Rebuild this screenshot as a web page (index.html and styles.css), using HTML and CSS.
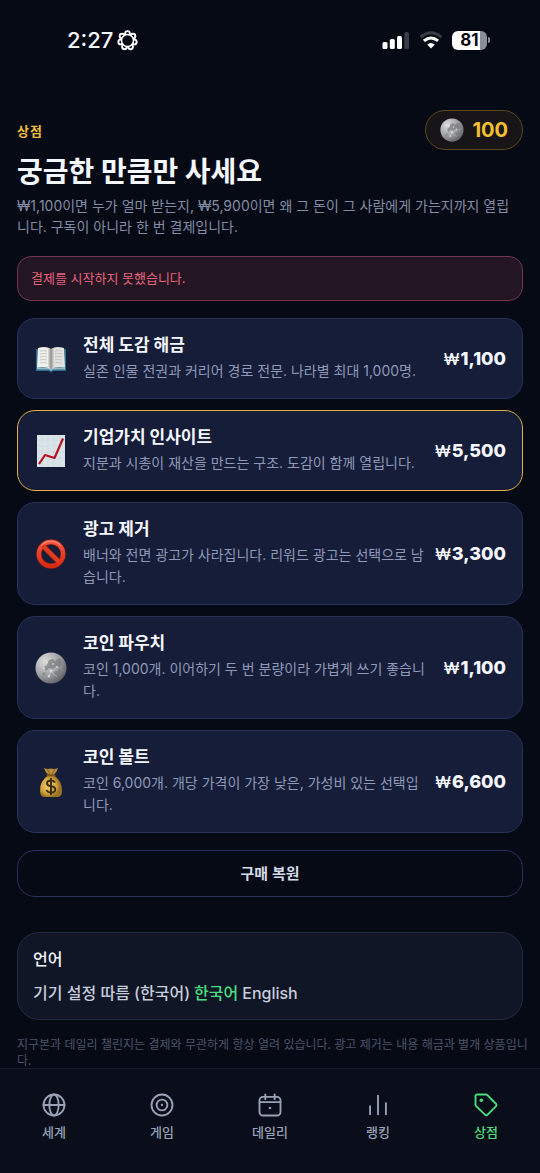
FILE: index.html
```html
<!DOCTYPE html>
<html lang="ko">
<head>
<meta charset="utf-8">
<meta name="viewport" content="width=device-width, initial-scale=1">
<title>상점</title>
<link rel="stylesheet" href="styles.css">
</head>
<body>
<svg width="0" height="0" class="defs" aria-hidden="true">
  <defs>
    <radialGradient id="moon-fill" cx="0.3" cy="0.28" r="0.85">
      <stop offset="0" stop-color="#dcdcdc"/><stop offset="0.5" stop-color="#a5a6a8"/><stop offset="1" stop-color="#55575b"/>
    </radialGradient>
    <symbol id="moon" viewBox="0 0 32 32">
      <circle cx="16" cy="16" r="15.5" fill="url(#moon-fill)"/>
      <path d="M14 8l4-1 2 2 4-3 3 5-2 4-4-1-3 3-4-1-3 3-2-4 3-2z" fill="#77797c" opacity=".7"/>
      <path d="M20 18l5-1 2 3-4 3-4-1zM8 20l3 1-1 3-3-1z" fill="#7b7d80" opacity=".6"/>
      <g fill="#e3e3e3" opacity=".75"><circle cx="12" cy="10" r="1.2"/><circle cx="18" cy="12" r="1"/><circle cx="16" cy="19" r="1.5"/><circle cx="14" cy="24" r="1.3"/><circle cx="22" cy="15" r="1"/><circle cx="9" cy="16" r="1"/></g>
      <path d="M16 19l6 6M16 19l-3 7M16 19l7-1" stroke="#ddd" stroke-width=".7" opacity=".6"/>
    </symbol>
  </defs>
</svg>
<div class="app">
  <div class="status">
    <div class="status-side">
      <span class="time">2:27</span>
      <svg width="21" height="21" viewBox="0 0 22 22" fill="none" stroke="#fff" stroke-width="2" aria-hidden="true">
        <g fill="#060a15"><circle cx="11" cy="3.7" r="2.500"/><circle cx="16.700" cy="6.500" r="2.500"/><circle cx="18.100" cy="12.600" r="2.500"/><circle cx="14.200" cy="17.600" r="2.500"/><circle cx="7.800" cy="17.600" r="2.500"/><circle cx="3.900" cy="12.600" r="2.500"/><circle cx="5.300" cy="6.500" r="2.500"/></g>
        <circle cx="11" cy="11" r="6.300" fill="#060a15" stroke-width="1.700"/>
      </svg>
    </div>
    <div class="status-side">
      <svg width="28" height="18" viewBox="0 0 28 18" fill="#fff" aria-hidden="true">
        <rect x="0.5" y="11" width="5" height="7" rx="1.5"/><rect x="7.8" y="8" width="5" height="10" rx="1.5"/><rect x="15" y="5" width="5" height="13" rx="1.5"/><rect x="22.3" y="1" width="4.7" height="17" rx="1.5" fill="#393d47"/>
      </svg>
      <svg width="24" height="18" viewBox="0 0 24 18" fill="none" stroke-width="3" aria-hidden="true">
        <path d="M1.5 6.2Q12-2.7 22.5 6.2" stroke="#393d47"/>
        <path d="M4.9 9.9Q12 4 19.1 9.9" stroke="#fff"/>
        <path d="M12 17.5l-3.8-4.1q3.8-3 7.6 0z" fill="#fff"/>
      </svg>
      <div class="battery"><span class="battery-level">81</span></div>
    </div>
  </div>

  <main class="scroll">
    <header class="top">
      <span class="eyebrow">상점</span>
      <span class="coins"><svg width="24" height="24" aria-hidden="true"><use href="#moon"/></svg>100</span>
    </header>
    <h1 class="title">궁금한 만큼만 사세요</h1>
    <p class="lead">₩1,100이면 누가 얼마 받는지, ₩5,900이면 왜 그 돈이 그 사람에게 가는지까지 열립니다. 구독이 아니라 한 번 결제입니다.</p>
    <p class="alert" role="alert">결제를 시작하지 못했습니다.</p>

    <div class="products">
      <button type="button" class="card">
        <svg class="emoji" viewBox="0 0 34 34" aria-hidden="true">
          <path d="M2 7h30v22H19l-2 1.5L15 29H2z" fill="#2d6d8e"/>
          <path d="M3 25.5h28v2H19l-2 1.5-2-1.5H3z" fill="#9dbac6"/>
          <path d="M4 6q8-2.500 13 1v20q-5-3-14-1.500z" fill="#efefed"/>
          <path d="M30 6q-8-2.500-13 1v20q5-3 14-1.500z" fill="#e2e2df"/>
          <path d="M14.500 6q2 .5 2.500 2 .5-1.500 2.500-2v19l-2.500 2-2.500-2z" fill="#b9b9b5"/>
          <path d="M17 7v20" stroke="#777" stroke-width=".8"/>
          <path d="M6 9q4-1 7 0M6 12q4-1 7 0M6 15q4-1 7 0M6 18q4-1 7 0M6 21q4-1 7 0M21 9q3-1 7 0M21 12q3-1 7 0M21 15q3-1 7 0M21 18q3-1 7 0M21 21q3-1 7 0" stroke="#bbb" stroke-width=".8" fill="none"/>
        </svg>
        <span class="info"><span class="name">전체 도감 해금</span><span class="desc">실존 인물 전권과 커리어 경로 전문. 나라별 최대 1,000명.</span></span>
        <span class="price"><span class="won">₩</span>1,100</span>
      </button>
      <button type="button" class="card card-featured">
        <svg class="emoji" viewBox="0 0 34 34" aria-hidden="true">
          <rect x="3" y="1" width="28" height="32" fill="#d9e3e8"/>
          <path d="M3 6h28M3 12h28M3 18h28M3 24h28M8 1v32M14 1v32M20 1v32M26 1v32" stroke="#cdd9df" stroke-width=".6"/>
          <path d="M5 30l6-9 9.500 3L29 4.500" fill="none" stroke="#b8141f" stroke-width="2.200" stroke-linejoin="round"/>
        </svg>
        <span class="info"><span class="name">기업가치 인사이트</span><span class="desc">지분과 시총이 재산을 만드는 구조. 도감이 함께 열립니다.</span></span>
        <span class="price"><span class="won">₩</span>5,500</span>
      </button>
      <button type="button" class="card">
        <svg class="emoji" viewBox="0 0 34 34" aria-hidden="true">
          <defs><linearGradient id="ban" x2="0" y2="1"><stop stop-color="#f0573f"/><stop offset="1" stop-color="#d52c12"/></linearGradient></defs>
          <g fill="none" stroke="#8f1c12" stroke-width="5.400"><circle cx="17" cy="17" r="12"/><path d="M8.500 8.500l17 17"/></g>
          <g fill="none" stroke="url(#ban)" stroke-width="4.200"><circle cx="17" cy="17" r="12.200"/><path d="M8.500 8.500l17 17" stroke="#df3a22"/></g>
          <path d="M7 9a13 13 0 0 1 20 0" fill="none" stroke="#ff9c88" stroke-width=".9"/>
        </svg>
        <span class="info"><span class="name">광고 제거</span><span class="desc">배너와 전면 광고가 사라집니다. 리워드 광고는 선택으로 남습니다.</span></span>
        <span class="price"><span class="won">₩</span>3,300</span>
      </button>
      <button type="button" class="card">
        <svg class="emoji" viewBox="0 0 34 34" aria-hidden="true"><use href="#moon" x="1" y="1" width="32" height="32"/></svg>
        <span class="info"><span class="name">코인 파우치</span><span class="desc">코인 1,000개. 이어하기 두 번 분량이라 가볍게 쓰기 좋습니다.</span></span>
        <span class="price"><span class="won">₩</span>1,100</span>
      </button>
      <button type="button" class="card">
        <svg class="emoji" viewBox="0 0 34 34" aria-hidden="true">
          <defs><radialGradient id="bag" cx=".4" cy=".5"><stop stop-color="#f2cf6c"/><stop offset=".7" stop-color="#d3a53c"/><stop offset="1" stop-color="#9b7224"/></radialGradient></defs>
          <path d="M10 3q3.500 1.500 7 .5 3.500 1 7-.5-1 4-4.500 7h-5Q11 7 10 3z" fill="#b98f3c"/>
          <path d="M14.500 10h5q9 6 8.500 16 0 6-5 6H11q-5 0-5-6Q5.500 16 14.500 10z" fill="url(#bag)"/>
          <path d="M13.500 10.200h7" stroke="#7d5617" stroke-width="2" stroke-linecap="round"/>
          <path d="M13 4l3 5M21 4l-3 5" stroke="#7d5617" stroke-width=".8"/>
          <path d="M21 17.500q-1-2-4-2-4 0-4 2.800 0 2.500 4 3 4.200.5 4.200 3.200 0 3-4.200 3-3.500 0-4.500-2.500M17 13v17" fill="none" stroke="#3c2c10" stroke-width="2"/>
        </svg>
        <span class="info"><span class="name">코인 볼트</span><span class="desc">코인 6,000개. 개당 가격이 가장 낮은, 가성비 있는 선택입니다.</span></span>
        <span class="price"><span class="won">₩</span>6,600</span>
      </button>
    </div>

    <button type="button" class="restore">구매 복원</button>

    <section class="language" aria-labelledby="language-title">
      <h2 class="language-title" id="language-title">언어</h2>
      <div class="language-options">
        <button type="button" class="option">기기 설정 따름 (한국어)</button>
        <button type="button" class="option option-active">한국어</button>
        <button type="button" class="option">English</button>
      </div>
    </section>
    <p class="note">지구본과 데일리 챌린지는 결제와 무관하게 항상 열려 있습니다. 광고 제거는 내용 해금과 별개 상품입니다.</p>
  </main>

  <nav class="tabs">
    <a class="tab" href="#world"><svg class="tab-icon" viewBox="0 0 24 24" aria-hidden="true"><circle cx="12" cy="12" r="9"/><path d="M3 12h18"/><ellipse cx="12" cy="12" rx="4" ry="9"/></svg>세계</a>
    <a class="tab" href="#game"><svg class="tab-icon" viewBox="0 0 24 24" aria-hidden="true"><circle cx="12" cy="12" r="9"/><circle cx="12" cy="12" r="4.600"/><circle cx="12" cy="12" r="1" class="dot"/></svg>게임</a>
    <a class="tab" href="#daily"><svg class="tab-icon" viewBox="0 0 24 24" aria-hidden="true"><rect x="3" y="5" width="18" height="16" rx="3"/><path d="M3 9.500h18M8 3v4M16 3v4"/><circle cx="12" cy="14.500" r="1.100" class="dot"/></svg>데일리</a>
    <a class="tab" href="#ranking"><svg class="tab-icon" viewBox="0 0 24 24" aria-hidden="true"><path d="M5.200 20v-7M12 20V4M18.800 20v-9.500"/></svg>랭킹</a>
    <a class="tab tab-active" href="#shop" aria-current="page"><svg class="tab-icon" viewBox="0 0 24 24" aria-hidden="true"><path d="M3 4.500A1.500 1.500 0 0 1 4.500 3h7.300a2 2 0 0 1 1.400.6l7.300 7.300a1.600 1.600 0 0 1 0 2.300l-7.100 7.100a1.600 1.600 0 0 1-2.300 0l-7.500-7.400a2 2 0 0 1-.6-1.400z"/><circle cx="8" cy="8" r="1.500" class="dot"/></svg>상점</a>
  </nav>
</div>
</body>
</html>
```

FILE: styles.css
```css
* { box-sizing: border-box; }

body, h1, h2, p { margin: 0; }

body {
  background: #060a15;
  color: #f5f7ff;
  font-family: Inter, "Noto Sans CJK KR", sans-serif;
}

button {
  font: inherit;
  color: inherit;
  background: none;
  border: 0;
  padding: 0;
  cursor: pointer;
}

.defs { position: absolute; }

.app {
  display: flex;
  flex-direction: column;
  height: 100vh;
}

.status {
  flex: none;
  display: flex;
  align-items: center;
  justify-content: space-between;
  height: 80px;
  padding: 0 50px 0 67px;
}

.status-side {
  display: flex;
  align-items: center;
  gap: 9px;
}

.status-side:first-child { gap: 4px; }

.time {
  font-size: 22px;
  font-weight: 500;
  line-height: 26px;
}

.battery {
  display: flex;
  align-items: center;
  gap: 1px;
}

.battery::after {
  content: "";
  width: 2px;
  height: 6px;
  border-radius: 0 2px 2px 0;
  background: #8b8e96;
}

.battery-level {
  width: 35px;
  border-radius: 6px;
  background: linear-gradient(90deg, #fff 81%, #8b8e96 81%);
  color: #060a15;
  font-size: 17px;
  font-weight: 700;
  line-height: 19px;
  text-align: center;
}

.scroll {
  flex: 1;
  min-height: 0;
  overflow-y: auto;
  scrollbar-width: none;
  padding: 30px 17px 0;
}

.top {
  display: flex;
  align-items: center;
  justify-content: space-between;
}

.eyebrow {
  color: #f0bd3a;
  font-size: 13px;
  font-weight: 700;
  letter-spacing: 1px;
}

.coins {
  display: flex;
  align-items: center;
  gap: 8px;
  height: 40px;
  padding: 0 14px;
  border: 1px solid #5c4818;
  border-radius: 20px;
  background: #181519;
  color: #f5c030;
  font-size: 20px;
  font-weight: 700;
}

.title {
  margin-top: 4px;
  font-size: 28px;
  font-weight: 700;
  line-height: 36px;
}

.lead {
  margin-top: 5px;
  padding-right: 8px;
  color: #828ca4;
  font-size: 14px;
  line-height: 21px;
}

.alert {
  margin-top: 19px;
  padding: 12px 13px;
  border: 1px solid #73364f;
  border-radius: 14px;
  background: #231522;
  color: #e5647f;
  font-size: 13px;
  line-height: 19px;
}

.products {
  display: flex;
  flex-direction: column;
  gap: 11px;
  margin-top: 17px;
}

.card {
  display: flex;
  align-items: center;
  padding: 16px;
  border: 1px solid #27315a;
  border-radius: 18px;
  background: #161d38;
  text-align: left;
}

.card-featured { border-color: #dcb044; }

.emoji {
  flex: none;
  width: 34px;
  height: 34px;
  margin-right: 15px;
}

.info {
  flex: 1;
  display: flex;
  flex-direction: column;
  gap: 4px;
}

.name {
  font-size: 17px;
  font-weight: 700;
  line-height: 21px;
}

.desc {
  color: #8f99b8;
  font-size: 14px;
  line-height: 22px;
}

.price {
  margin-left: 11px;
  font-size: 18px;
  font-weight: 800;
  line-height: 22px;
  white-space: nowrap;
}

.won {
  margin-right: 1px;
  font-size: 16px;
  font-weight: 500;
}

.restore {
  display: block;
  width: 100%;
  margin-top: 17px;
  padding: 12px;
  border: 1px solid #27315a;
  border-radius: 18px;
  color: #d5dbea;
  font-size: 15px;
  font-weight: 600;
  line-height: 21px;
}

.language {
  margin-top: 35px;
  padding: 15px;
  border: 1px solid #202b48;
  border-radius: 22px;
  background: #101625;
}

.language-title {
  font-size: 16px;
  font-weight: 500;
  line-height: 22px;
}

.language-options {
  display: flex;
  gap: 4px;
  margin-top: 12px;
}

.option {
  color: #c6cddd;
  font-size: 16px;
  font-weight: 500;
  line-height: 22px;
}

.option-active { color: #4ade80; }

.note {
  margin: 16px -8px 0 0;
  color: #4c5468;
  font-family: "Noto Sans CJK KR", sans-serif;
  font-size: 12px;
  line-height: 16px;
}

.tabs {
  flex: none;
  display: grid;
  grid-template-columns: repeat(5, 1fr);
  padding: 22px 0 32px;
  border-top: 1px solid #171e2c;
  background: #090e1a;
}

.tab {
  display: flex;
  flex-direction: column;
  align-items: center;
  gap: 4px;
  color: #99a2b7;
  font-size: 13px;
  font-weight: 500;
  line-height: 18px;
  text-decoration: none;
}

.tab-active { color: #4ade80; }

.tab-icon {
  width: 28px;
  height: 28px;
  fill: none;
  stroke: currentColor;
  stroke-width: 1.6;
  stroke-linecap: round;
  stroke-linejoin: round;
}

.dot {
  fill: currentColor;
  stroke: none;
}
```
